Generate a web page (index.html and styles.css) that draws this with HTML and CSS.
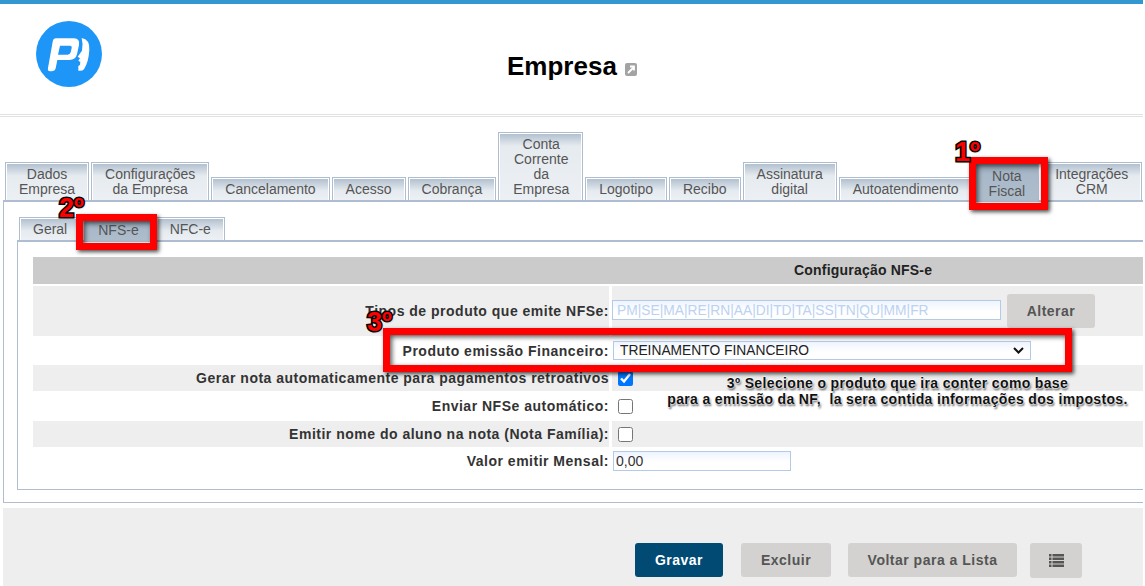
FILE: index.html
```html
<!DOCTYPE html>
<html lang="pt">
<head>
<meta charset="utf-8">
<title>Empresa</title>
<link rel="stylesheet" href="styles.css">
</head>
<body>
<div class="page">
  <header class="header">
    <svg class="logo" viewBox="108 63 198 198" aria-label="Logo">
      <circle cx="207" cy="162" r="99" fill="#1e96f7"/>
      <path fill="#fff" fill-rule="evenodd" d="M168 115H222Q240 115 237 135L231 163Q227 180 208 180H172L167 205Q165 214 154 214H150Q142 214 144 204L158 125Q160 115 168 115ZM180 137L174 164H203Q210 164 212 157L215 144Q216 137 209 137Z"/>
      <path fill="#fff" d="M245 114Q270 118 268 150Q266 185 252 208Q246 214 235 212L235 198Q242 195 241 186L235 182L240 175L233 170L246 152Q250 132 245 114Z"/>
    </svg>
    <h1 class="title">Empresa</h1>
    <svg class="ext" viewBox="0 0 12 13" aria-hidden="true">
      <rect width="12" height="13" rx="2" fill="#a3a3a3"/>
      <path d="M3 10L8 5M5 3.5H9V7.5" fill="none" stroke="#fff" stroke-width="1.8"/>
    </svg>
  </header>

  <nav class="tabs">
    <div class="tab">Dados<br>Empresa</div>
    <div class="tab">Configurações<br>da Empresa</div>
    <div class="tab">Cancelamento</div>
    <div class="tab">Acesso</div>
    <div class="tab">Cobrança</div>
    <div class="tab tab-conta">Conta<br>Corrente<br>da<br>Empresa</div>
    <div class="tab">Logotipo</div>
    <div class="tab">Recibo</div>
    <div class="tab">Assinatura<br>digital</div>
    <div class="tab">Autoatendimento</div>
    <div class="tab active">Nota<br>Fiscal</div>
    <div class="tab">Integrações<br>CRM</div>
  </nav>

  <section class="panel">
    <nav class="subtabs">
      <div class="tab">Geral</div>
      <div class="tab active">NFS-e</div>
      <div class="tab">NFC-e</div>
    </nav>
    <div class="subpanel">
      <div class="form">
        <div class="form-head">Configuração NFS-e</div>

        <div class="label row-a shade">Tipos de produto que emite NFSe:</div>
        <div class="value row-a shade">
          <input class="field field-wide" type="text" value="PM|SE|MA|RE|RN|AA|DI|TD|TA|SS|TN|QU|MM|FR">
          <button class="btn btn-alterar" type="button">Alterar</button>
        </div>

        <div class="label row-b">Produto emissão Financeiro:</div>
        <div class="value row-b">
          <select class="field select"><option>TREINAMENTO FINANCEIRO</option></select>
        </div>

        <div class="label row-c shade">Gerar nota automaticamente para pagamentos retroativos</div>
        <div class="value row-c shade"><input class="check" type="checkbox" checked></div>

        <div class="label row-d">Enviar NFSe automático:</div>
        <div class="value row-d"><input class="check" type="checkbox"></div>

        <div class="label row-c shade">Emitir nome do aluno na nota (Nota Família):</div>
        <div class="value row-c shade"><input class="check" type="checkbox"></div>

        <div class="label row-e">Valor emitir Mensal:</div>
        <div class="value row-e"><input class="field field-small" type="text" value="0,00"></div>
      </div>
    </div>
  </section>

  <footer class="actions">
    <button class="btn btn-primary" type="button">Gravar</button>
    <button class="btn btn-excluir" type="button">Excluir</button>
    <button class="btn btn-voltar" type="button">Voltar para a Lista</button>
    <button class="btn btn-icon" type="button" aria-label="Lista">
      <svg viewBox="0 0 15 13" width="15" height="13" aria-hidden="true">
        <path fill="#555" d="M0 0H2.5V2.5H0ZM3.5 0H15V2.5H3.5ZM0 3.5H2.5V6H0ZM3.5 3.5H15V6H3.5ZM0 7H2.5V9.5H0ZM3.5 7H15V9.5H3.5ZM0 10.5H2.5V13H0ZM3.5 10.5H15V13H3.5Z"/>
      </svg>
    </button>
  </footer>

  <div class="box box-nota"></div>
  <div class="box box-nfse"></div>
  <div class="box box-produto"></div>
  <div class="num num-1">1º</div>
  <div class="num num-2">2º</div>
  <div class="num num-3">3º</div>
  <div class="note">3º Selecione o produto que ira conter como base<br>para a emissão da NF,&nbsp; la sera contida informações dos impostos.</div>
</div>
</body>
</html>
```
FILE: styles.css
```css
* { box-sizing: border-box; }
html, body { margin: 0; height: 100%; overflow: hidden; background: #fff; }
body { font-family: "Liberation Sans", Arial, sans-serif; color: #333; }
.page { position: relative; width: 1143px; height: 586px; overflow: hidden; }

.page::before { content: ""; display: block; height: 4px; background: #3498d0; }
.header {
  display: flex; align-items: flex-start; height: 113px;
  padding: 17px 0 0 36px; border-bottom: 3px double #e2e2e2;
}
.logo { width: 66px; height: 66px; flex: none; }
.title { margin: 29px 0 0 405px; font-size: 26px; line-height: 32px; font-weight: 700; color: #000; }
.ext { width: 12px; height: 13px; margin: 42px 0 0 8px; flex: none; }

.tabs { display: flex; align-items: flex-end; gap: 2px; height: 83px; padding-left: 5px; }
.tab {
  flex: none; padding: 4px 13px 3px; border: 1px solid #aebdcf; border-bottom: 0;
  font-size: 14px; line-height: 15px; color: #555; text-align: center;
  background: linear-gradient(#aebdcc 0, #e6ebf0 13px, #ecf0f4 100%);
  box-shadow: inset 1px 1px 0 #fff, inset -1px 0 0 #fff;
}
.tab.active {
  padding-top: 6px; padding-bottom: 1px;
  background: linear-gradient(#8f9fb0 0, #a9b9c9 12px, #aebdcc 100%);
  box-shadow: none;
}
.tab-conta { padding-left: 14px; }

.panel {
  margin-left: 3px; height: 303px;
  padding: 15px 0 0 13px;
  border: 1px solid #aebdcf; border-top-width: 2px; border-right: 0;
}
.subtabs { display: flex; align-items: flex-end; gap: 3px; padding-left: 2px; }
.subtabs .tab { height: 23px; padding: 4px 13px 0; }
.subtabs .tab.active { padding-top: 5px; }
.subpanel {
  height: 250px; padding: 15px 0 0 15px;
  border: 1px solid #aebdcf; border-top-width: 2px; border-right: 0;
}

.form {
  display: grid; grid-template-columns: 576px 1fr; column-gap: 3px;
  font-size: 14px;
}
.form-head {
  grid-column: 1 / -1; height: 27px; margin-bottom: 2px; padding-left: 761px;
  background: #cbcbcb; color: #222; font-size: 14px; letter-spacing: .2px; font-weight: 700; line-height: 27px;
}
.label {
  display: flex; align-items: center; justify-content: flex-end;
  font-weight: 700; letter-spacing: .5px; color: #333;
}
.value { display: flex; align-items: center; }
.shade { background: #eee; }
.row-a { height: 50px; }
.row-b { height: 29px; }
.row-c { height: 26px; }
.row-d { height: 30px; }
.row-e { height: 28px; }

.field {
  height: 20px; padding: 0 4px; border: 1px solid #b4cbe8; border-radius: 0;
  background: linear-gradient(#eef4ff, #fff 60%);
  font-family: "Liberation Sans", Arial, sans-serif; font-size: 13.8px; color: #333;
}
.field-wide { width: 389px; margin-bottom: 2px; color: #bcd2f0; }
.field-small { width: 178px; margin-left: 1px; padding: 0 2px; font-size: 14px; }
.select {
  width: 418px; margin-left: 1px; height: 19px; padding: 0 20px 0 6px; color: #222;
  appearance: none; -webkit-appearance: none;
  background:
    url("data:image/svg+xml,%3Csvg xmlns='http://www.w3.org/2000/svg' width='11' height='7'%3E%3Cpath d='M1 1l4.5 4.5L10 1' fill='none' stroke='%23111' stroke-width='2'/%3E%3C/svg%3E") no-repeat right 6px center,
    linear-gradient(#eef4ff, #fff 60%);
}
.check { width: 15px; height: 15px; margin: 0 0 0 6px; }

.btn {
  height: 34px; border: 0; border-radius: 3px; padding: 0;
  background: #d3d2d0; color: #555; letter-spacing: .5px;
  font-family: "Liberation Sans", Arial, sans-serif; font-size: 14px; font-weight: 700;
}
.btn-alterar { width: 88px; margin-left: 6px; }

.actions {
  display: flex; align-items: flex-start; height: 78px; margin: 5px 0 0 3px;
  padding: 35px 0 0 632px; background: #eee;
}
.btn-primary { width: 88px; background: #004a73; color: #fff; }
.btn-excluir { width: 90px; margin-left: 18px; }
.btn-voltar { width: 169px; margin-left: 17px; }
.btn-icon { width: 52px; height: 35px; margin-left: 13px; display: flex; align-items: center; justify-content: center; }

.box { position: absolute; border: 7px solid #f00; box-shadow: 2px 2px 4px rgba(0,0,0,.7), inset 2px 2px 5px rgba(0,0,0,.65); }
.box-nota { left: 969px; top: 157px; width: 79px; height: 53px; }
.box-nfse { left: 76px; top: 214px; width: 81px; height: 36px; }
.box-produto { left: 383px; top: 328px; width: 689px; height: 44px; }

.num {
  position: absolute; font-size: 27px; line-height: 27px; font-weight: 700; color: #f00;
  -webkit-text-stroke: 3px #000; paint-order: stroke fill;
  text-shadow: 1px 1px 2px rgba(0,0,0,.5);
}
.num-1 { left: 955px; top: 139px; }
.num-2 { left: 59px; top: 195px; }
.num-3 { left: 367px; top: 309px; }

.note {
  position: absolute; left: 640px; top: 375px; width: 515px;
  font-size: 14px; line-height: 16px; font-weight: 700; color: #111; text-align: center;
  letter-spacing: .35px;
  text-shadow: 0 0 2px #fff, 0 0 2px #fff, 0 0 2px #fff, 1px 2px 2px rgba(0,0,0,.7);
}
```
